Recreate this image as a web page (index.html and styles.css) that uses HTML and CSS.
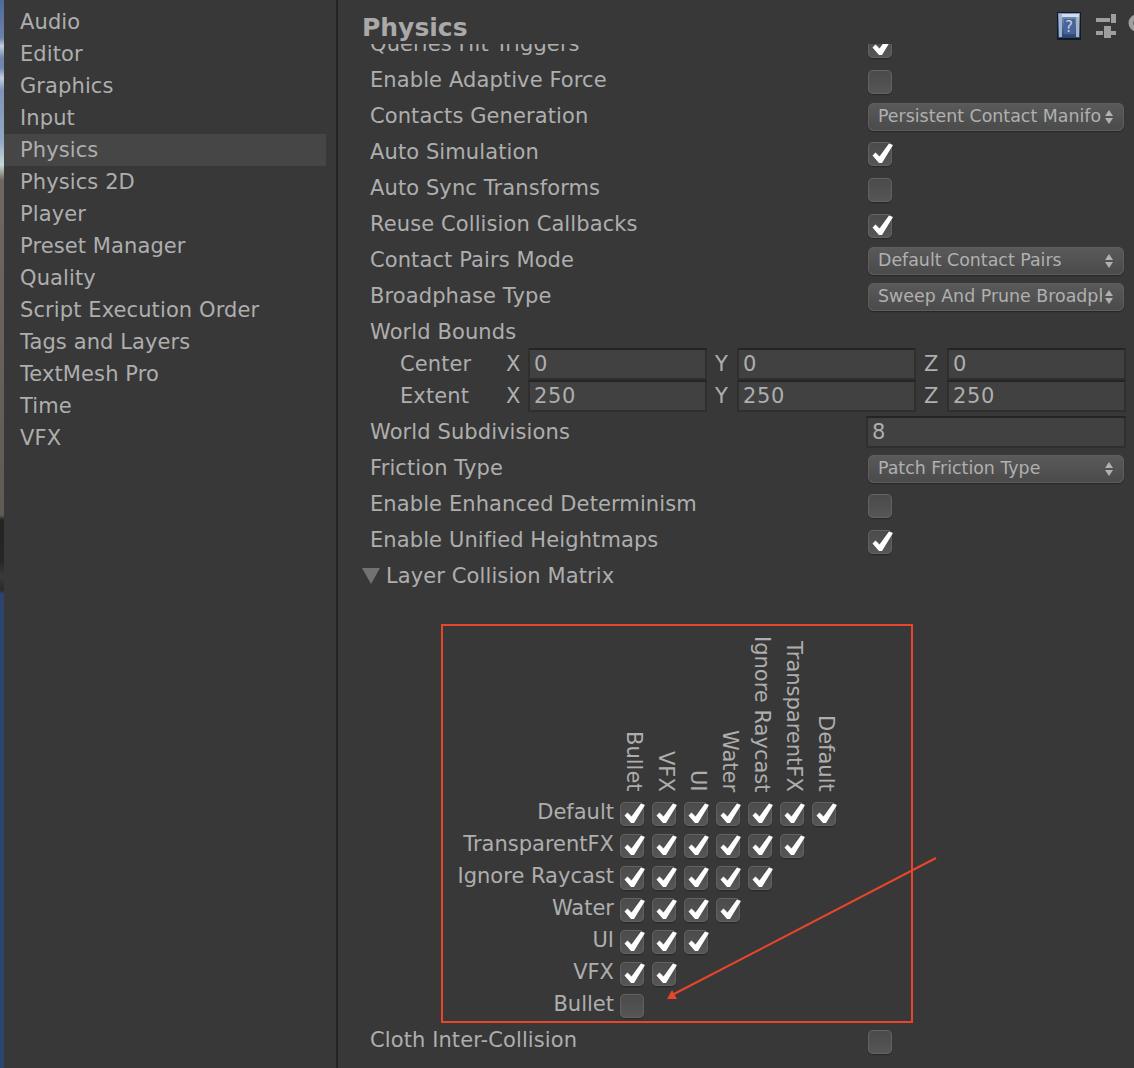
FILE: index.html
```html
<!DOCTYPE html>
<html lang="en">
<head>
    <meta charset="UTF-8">
    <title>Project Settings - Physics</title>
    <link rel="stylesheet" href="styles.css">
</head>
<body>
    <div class="strip"></div>
    <ul class="sidebar">
        <li>Audio</li>
        <li>Editor</li>
        <li>Graphics</li>
        <li>Input</li>
        <li class="active">Physics</li>
        <li>Physics 2D</li>
        <li>Player</li>
        <li>Preset Manager</li>
        <li>Quality</li>
        <li>Script Execution Order</li>
        <li>Tags and Layers</li>
        <li>TextMesh Pro</li>
        <li>Time</li>
        <li>VFX</li>
    </ul>
    <div class="panel">
        <div class="header">
            <h1>Physics</h1>
            <div class="tools">
                <svg class="help" width="26" height="28" viewBox="0 0 26 28">
                    <defs>
                        <linearGradient id="book" x1="0" y1="0" x2="0" y2="1">
                            <stop offset="0" stop-color="#7f97bd"/>
                            <stop offset="1" stop-color="#2b4269"/>
                        </linearGradient>
                    </defs>
                    <rect x="1" y="0" width="24" height="28" fill="#0f1a2c"/>
                    <rect x="2" y="1" width="22" height="25" fill="url(#book)"/>
                    <rect x="3" y="2" width="3" height="23" fill="#9db4d4"/>
                    <rect x="6" y="2" width="17" height="3" fill="#d5dde8"/>
                    <rect x="20" y="5" width="3" height="20" fill="#aab4c2"/>
                    <rect x="8" y="7" width="11" height="15" fill="#45659c"/>
                </svg>
                <span class="help-mark">?</span>
                <svg class="sliders" width="20" height="24" viewBox="0 0 20 24" fill="#9e9e9e">
                    <rect x="0" y="4" width="14" height="4"/>
                    <rect x="15" y="0" width="5" height="9"/>
                    <rect x="0" y="17" width="7" height="4"/>
                    <rect x="8" y="12" width="7" height="12"/>
                    <rect x="15" y="17" width="5" height="4"/>
                </svg>
                <svg class="gear" width="6" height="24" viewBox="0 0 6 24">
                    <circle cx="9" cy="9" r="6" fill="none" stroke="#9e9e9e" stroke-width="5"/>
                </svg>
            </div>
        </div>
        <div class="view">
            <div class="rows">
                <div class="row first"><span>Queries Hit Triggers</span><i class="box on"></i></div>
                <div class="row"><span>Enable Adaptive Force</span><i class="box"></i></div>
                <div class="row"><span>Contacts Generation</span><div class="select"><span>Persistent Contact Manifold</span></div></div>
                <div class="row"><span>Auto Simulation</span><i class="box on"></i></div>
                <div class="row"><span>Auto Sync Transforms</span><i class="box"></i></div>
                <div class="row"><span>Reuse Collision Callbacks</span><i class="box on"></i></div>
                <div class="row"><span>Contact Pairs Mode</span><div class="select"><span>Default Contact Pairs</span></div></div>
                <div class="row"><span>Broadphase Type</span><div class="select"><span>Sweep And Prune Broadphase</span></div></div>
                <div class="row short"><span>World Bounds</span></div>
                <div class="vector">
                    <span class="vector-name">Center</span>
                    <span class="axis">X</span><div class="field">0</div>
                    <span class="axis">Y</span><div class="field">0</div>
                    <span class="axis">Z</span><div class="field">0</div>
                </div>
                <div class="vector">
                    <span class="vector-name">Extent</span>
                    <span class="axis">X</span><div class="field">250</div>
                    <span class="axis">Y</span><div class="field">250</div>
                    <span class="axis">Z</span><div class="field">250</div>
                </div>
                <div class="row"><span>World Subdivisions</span><div class="field wide">8</div></div>
                <div class="row"><span>Friction Type</span><div class="select"><span>Patch Friction Type</span></div></div>
                <div class="row"><span>Enable Enhanced Determinism</span><i class="box"></i></div>
                <div class="row"><span>Enable Unified Heightmaps</span><i class="box on"></i></div>
                <div class="row foldout"><b class="triangle"></b><span>Layer Collision Matrix</span></div>

                <div class="matrix">
                    <div></div>
                    <div class="top">Bullet</div>
                    <div class="top">VFX</div>
                    <div class="top">UI</div>
                    <div class="top">Water</div>
                    <div class="top">Ignore Raycast</div>
                    <div class="top">TransparentFX</div>
                    <div class="top">Default</div>

                    <div class="side">Default</div>
                    <i class="box on"></i><i class="box on"></i><i class="box on"></i><i class="box on"></i><i class="box on"></i><i class="box on"></i><i class="box on"></i>

                    <div class="side">TransparentFX</div>
                    <i class="box on"></i><i class="box on"></i><i class="box on"></i><i class="box on"></i><i class="box on"></i><i class="box on"></i><div></div>

                    <div class="side">Ignore Raycast</div>
                    <i class="box on"></i><i class="box on"></i><i class="box on"></i><i class="box on"></i><i class="box on"></i><div></div><div></div>

                    <div class="side">Water</div>
                    <i class="box on"></i><i class="box on"></i><i class="box on"></i><i class="box on"></i><div></div><div></div><div></div>

                    <div class="side">UI</div>
                    <i class="box on"></i><i class="box on"></i><i class="box on"></i><div></div><div></div><div></div><div></div>

                    <div class="side">VFX</div>
                    <i class="box on"></i><i class="box on"></i><div></div><div></div><div></div><div></div><div></div>

                    <div class="side">Bullet</div>
                    <i class="box"></i><div></div><div></div><div></div><div></div><div></div><div></div>
                </div>

                <div class="row"><span>Cloth Inter-Collision</span><i class="box"></i></div>
            </div>
        </div>
    </div>

    <!-- red annotation drawn on top of the screenshot -->
    <div class="callout"></div>
    <svg class="arrow" width="280" height="150" viewBox="0 0 280 150">
        <line x1="276" y1="2" x2="14" y2="138" stroke="#e8452a" stroke-width="2"/>
        <polygon points="7,143 17,143 12,134" fill="#e8452a"/>
    </svg>
</body>
</html>
```

FILE: styles.css
```css
* {
    margin: 0;
    padding: 0;
    box-sizing: border-box;
}
html, body {
    height: 1068px;
    overflow: hidden;
}
body {
    display: flex;
    position: relative;
    background-color: #383838;
    color: #aeaeae;
    font-family: "DejaVu Sans", sans-serif;
    font-size: 21px;
    letter-spacing: 0.1px;
    line-height: 32px;
}
.strip {
    width: 4px;
    background: linear-gradient(#4f6a9a 0, #6c82a8 38px, #c4cedc 46px, #6f85aa 58px, #7488ad 68px, #c4cedc 78px, #7f95b6 90px, #93a8c4 140px, #c8d8d8 165px, #6e6860 180px, #5f5a52 515px, #232323 520px, #262626 560px, #3a3a3a 576px, #2a2a2a 590px, #2c4570 594px, #2c4570 100%);
}
.sidebar {
    width: 332px;
    padding-top: 6px;
    list-style: none;
}
.sidebar li {
    height: 32px;
    margin-right: 10px;
    padding-left: 16px;
}
.sidebar .active {
    background-color: #464646;
}
.panel {
    flex: 1;
    min-width: 0;
    border-left: 2px solid #242424;
}
.header {
    display: flex;
    justify-content: space-between;
    height: 44px;
    padding-left: 24px;
}
h1 {
    font-size: 25px;
    line-height: 56px;
    letter-spacing: 0;
    color: #a9a9a9;
}
.tools {
    display: flex;
    position: relative;
    align-items: flex-start;
    padding-top: 12px;
}
.help-mark {
    position: absolute;
    left: 9px;
    top: 14px;
    font-size: 15px;
    line-height: 26px;
    color: #c6d2e6;
}
.sliders {
    margin: 2px 12px 0 14px;
}
.gear {
    margin-top: 2px;
}
.view {
    height: 1024px;
    overflow: hidden;
}
.rows {
    padding-left: 32px;
}
.row {
    display: flex;
    align-items: center;
    justify-content: space-between;
    height: 36px;
    padding-right: 10px;
}
.row.first {
    margin-top: -18px;
}
.row.short {
    height: 34px;
    padding-top: 2px;
}
.row > .box {
    margin: 4px 232px 0 0;
}
.select {
    display: flex;
    align-items: center;
    position: relative;
    width: 256px;
    height: 28px;
    margin-top: 2px;
    padding: 0 0 2px 10px;
    border-radius: 6px;
    background: linear-gradient(#5a5a5a, #4a4a4a);
    box-shadow: inset 0 0 0 1px #5e5e5e, 0 1px 1px #262626;
    font-size: 17.4px;
    letter-spacing: 0;
    color: #b0b0b0;
}
.select span {
    width: 224px;
    overflow: hidden;
    white-space: nowrap;
}
.select::before, .select::after {
    content: "";
    position: absolute;
    right: 11px;
    border-left: 4px solid transparent;
    border-right: 4px solid transparent;
}
.select::before {
    top: 7px;
    border-bottom: 6px solid #b0b0b0;
}
.select::after {
    bottom: 7px;
    border-top: 6px solid #b0b0b0;
}
.vector {
    display: flex;
    align-items: center;
    height: 32px;
    padding-left: 30px;
}
.vector + .row {
    margin-top: 2px;
}
.vector-name {
    width: 106px;
}
.axis {
    width: 22px;
    text-align: left;
}
.axis ~ .axis {
    width: 30px;
    padding-left: 8px;
}
.axis:last-of-type {
    width: 31px;
}
.field {
    width: 179px;
    height: 32px;
    padding-left: 4px;
    background-color: #414141;
    border: 2px solid #2f2f2f;
    border-top-color: #242424;
    letter-spacing: 0.6px;
    line-height: 29px;
}
.field.wide {
    width: 260px;
    margin-right: -2px;
}
.foldout {
    justify-content: flex-start;
}
.triangle {
    width: 0;
    height: 0;
    margin: 0 6px 0 -8px;
    border-left: 9px solid transparent;
    border-right: 9px solid transparent;
    border-top: 16px solid #727272;
}
.box {
    display: block;
    position: relative;
    width: 24px;
    height: 24px;
    border-radius: 5px;
    background: linear-gradient(#4a4a4a, #565656);
    box-shadow: inset 0 0 0 1px #626262, 0 1px 1px #262626;
}
.box.on::after {
    content: "";
    position: absolute;
    left: 0;
    top: 0;
    width: 26px;
    height: 24px;
    background-color: #fff;
    clip-path: polygon(4.5px 13.5px, 7.5px 10.5px, 11.5px 14.5px, 21px 1.5px, 25px 3px, 14px 21px, 11px 21px);
}
.matrix {
    display: grid;
    grid-template-columns: 250px repeat(7, 32px);
    grid-template-rows: 204px repeat(7, 32px);
    align-items: center;
    height: 428px;
    letter-spacing: 0;
}
.top {
    display: flex;
    align-items: center;
    justify-content: flex-end;
    align-self: end;
    width: 28px;
    margin-bottom: 6px;
    writing-mode: vertical-rl;
    line-height: 24px;
    white-space: nowrap;
}
.side {
    padding: 0 6px 4px 0;
    text-align: right;
    white-space: nowrap;
}
.callout {
    position: absolute;
    left: 441px;
    top: 624px;
    width: 472px;
    height: 399px;
    border: 2px solid #e8452a;
}
.arrow {
    position: absolute;
    left: 660px;
    top: 856px;
}
```
